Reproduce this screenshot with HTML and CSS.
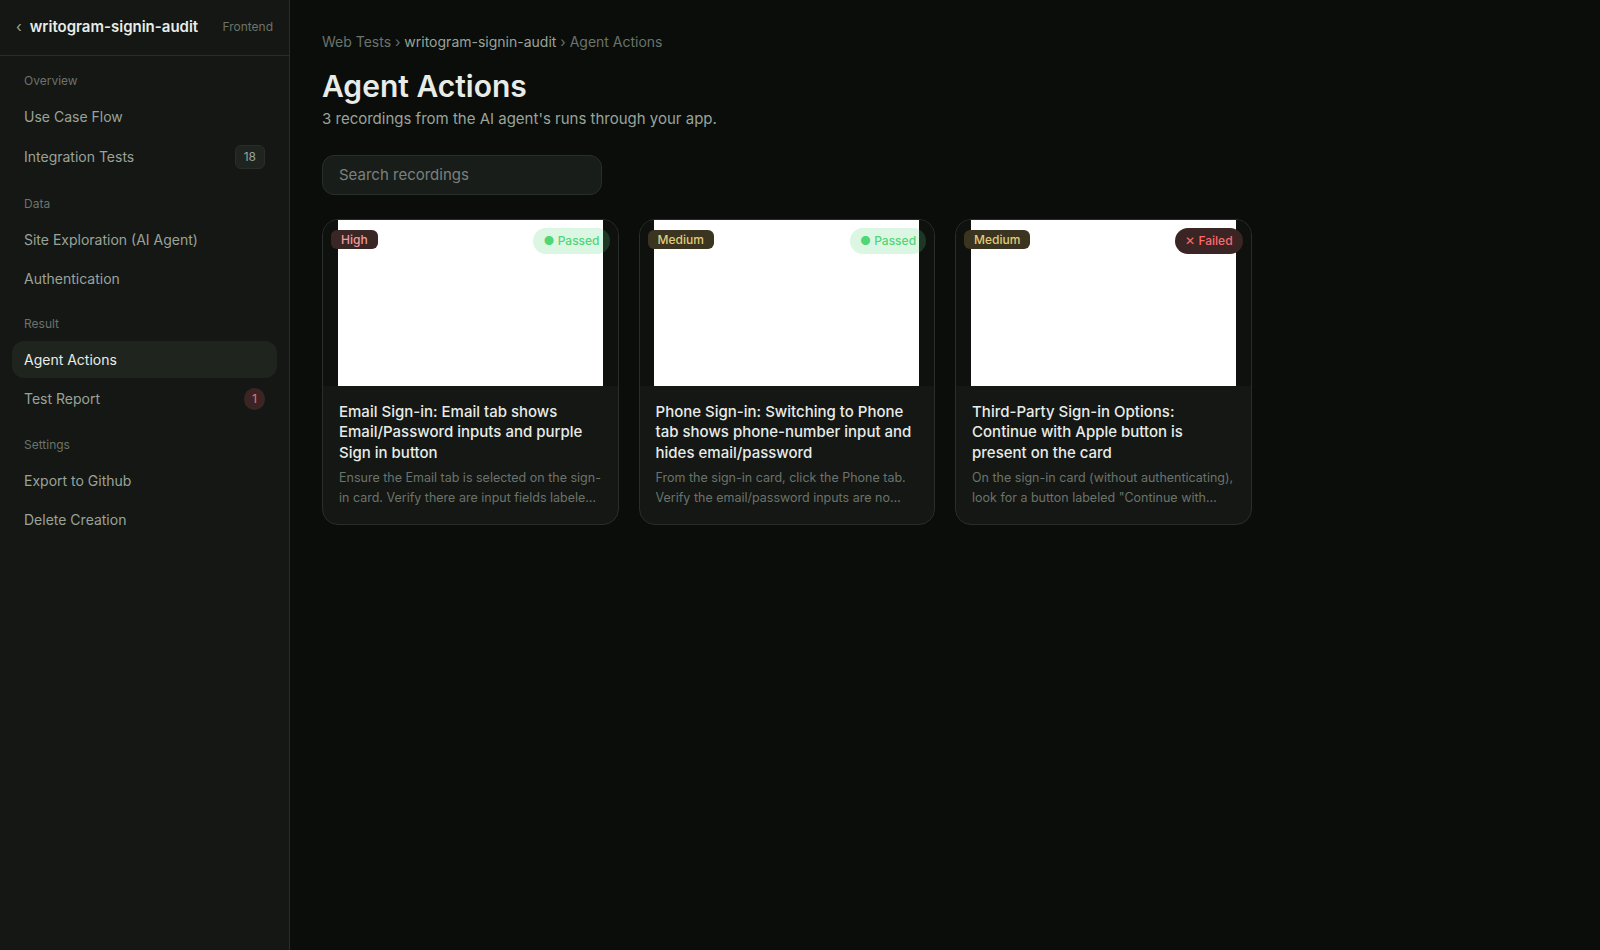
FILE: index.html
```html
<!DOCTYPE html>
<html lang="en">
<head>
  <meta charset="UTF-8">
  <meta name="viewport" content="width=device-width, initial-scale=1.0">
  <title>Agent Actions - writogram-signin-audit</title>
  <link rel="stylesheet" href="styles.css">
</head>
<body>
  <aside class="sidebar">
    <div class="sidebar-header">
      <a href="#" class="back">‹</a>
      <span class="project">writogram-signin-audit</span>
      <span class="kind">Frontend</span>
    </div>
    <nav class="nav">
      <div class="nav-section">
        <div class="nav-label">Overview</div>
        <a href="#" class="nav-item">Use Case Flow</a>
        <a href="#" class="nav-item">Integration Tests <span class="count">18</span></a>
      </div>
      <div class="nav-section">
        <div class="nav-label">Data</div>
        <a href="#" class="nav-item">Site Exploration (AI Agent)</a>
        <a href="#" class="nav-item">Authentication</a>
      </div>
      <div class="nav-section">
        <div class="nav-label">Result</div>
        <a href="#" class="nav-item active">Agent Actions</a>
        <a href="#" class="nav-item">Test Report <span class="alert">1</span></a>
      </div>
      <div class="nav-section">
        <div class="nav-label">Settings</div>
        <a href="#" class="nav-item">Export to Github</a>
        <a href="#" class="nav-item">Delete Creation</a>
      </div>
    </nav>
  </aside>

  <main class="main">
    <div class="breadcrumb">Web Tests › <a href="#">writogram-signin-audit</a> › Agent Actions</div>
    <h1>Agent Actions</h1>
    <p class="subtitle">3 recordings from the AI agent's runs through your app.</p>
    <input type="text" class="search" placeholder="Search recordings">

    <div class="grid">
      <article class="card">
        <div class="media">
          <div class="video"></div>
          <span class="priority high">High</span>
          <span class="status passed">● Passed</span>
        </div>
        <div class="card-body">
          <h2>Email Sign-in: Email tab shows Email/Password inputs and purple Sign in button</h2>
          <p>Ensure the Email tab is selected on the sign-in card. Verify there are input fields labeled Email and Password.</p>
        </div>
      </article>

      <article class="card">
        <div class="media">
          <div class="video"></div>
          <span class="priority medium">Medium</span>
          <span class="status passed">● Passed</span>
        </div>
        <div class="card-body">
          <h2>Phone Sign-in: Switching to Phone tab shows phone-number input and hides email/password</h2>
          <p>From the sign-in card, click the Phone tab. Verify the email/password inputs are no longer visible.</p>
        </div>
      </article>

      <article class="card">
        <div class="media">
          <div class="video"></div>
          <span class="priority medium">Medium</span>
          <span class="status failed">✕ Failed</span>
        </div>
        <div class="card-body">
          <h2>Third-Party Sign-in Options: Continue with Apple button is present on the card</h2>
          <p>On the sign-in card (without authenticating), look for a button labeled "Continue with Apple".</p>
        </div>
      </article>
    </div>
  </main>
</body>
</html>
```
FILE: styles.css
```css
* {
  box-sizing: border-box;
}
body {
  margin: 0;
  font-family: Inter, sans-serif;
  font-size: 15px;
  line-height: 1.5;
  background-color: #0a0d0a;
  color: #e8ece8;
  display: flex;
  min-height: 100vh;
}
a {
  color: inherit;
  text-decoration: none;
}
.sidebar {
  width: 290px;
  flex-shrink: 0;
  background-color: #141714;
  border-right: 1px solid #2a2e2a;
}
.sidebar-header {
  display: flex;
  align-items: center;
  gap: 8px;
  height: 56px;
  padding: 0 16px 1px;
  border-bottom: 1px solid #2a2e2a;
}
.back {
  font-size: 15px;
  color: #9aa39a;
}
.project {
  font-size: 15px;
  font-weight: 600;
}
.kind {
  margin-left: auto;
  font-size: 12px;
  color: #6b736b;
}
.nav {
  padding: 11.75px 12px;
}
.nav-section {
  display: flex;
  flex-direction: column;
  gap: 2px;
  margin-bottom: 14px;
}
.nav-label {
  padding: 4px 12px 6px;
  font-size: 12px;
  color: #6b736b;
}
.nav-item {
  display: flex;
  align-items: center;
  justify-content: space-between;
  padding: 8px 12px;
  border-radius: 12px;
  font-size: 14px;
  color: #9aa39a;
}
.nav-item.active {
  background-color: #1f241f;
  color: #e8ece8;
}
.count {
  padding: 2px 8px;
  border: 1px solid #2a2e2a;
  border-radius: 6px;
  background-color: #1f241f;
  font-size: 12px;
}
.alert {
  padding: 2px 8px;
  border-radius: 999px;
  background-color: #3b2424;
  color: #ff6b6b;
  font-size: 12px;
}
.main {
  flex: 1;
  padding: 32px;
}
.breadcrumb {
  margin-bottom: 17px;
  font-size: 14px;
  line-height: 19px;
  color: #6b736b;
}
.breadcrumb a {
  color: #9aa39a;
}
h1 {
  margin: 0 0 4px;
  font-size: 30px;
  font-weight: 600;
  line-height: 1.2;
}
.subtitle {
  margin: 0 0 26px;
  line-height: 21px;
  color: #9aa39a;
}
.search {
  display: block;
  width: 280px;
  height: 40px;
  margin-bottom: 24px;
  padding: 0 16px 2px;
  border: 1px solid #2a2e2a;
  border-radius: 12px;
  background-color: #191d1a;
  color: #e8ece8;
  font-family: inherit;
  font-size: 15px;
}
.search::placeholder {
  color: #7c807c;
}
.grid {
  display: grid;
  grid-template-columns: repeat(3, 1fr);
  gap: 20px;
  max-width: 929.6px;
}
.card {
  border: 1px solid #2a2e2a;
  border-radius: 16px;
  background-color: #141714;
  overflow: hidden;
}
.media {
  position: relative;
  display: flex;
  justify-content: center;
  aspect-ratio: 16 / 9;
  background-color: #0f110f;
}
.video {
  height: 100%;
  aspect-ratio: 16 / 10;
  background-color: #fff;
}
.priority {
  position: absolute;
  top: 10px;
  left: 8px;
  padding: 0 10px;
  border-radius: 6px;
  font-size: 12px;
  font-weight: 500;
  line-height: 19px;
}
.high {
  background-color: #3b2626;
  color: #f29b9b;
}
.medium {
  background-color: #3a3420;
  color: #e0cc7a;
}
.status {
  position: absolute;
  top: 8px;
  right: 8px;
  padding: 4px 10px;
  border-radius: 999px;
  font-size: 12px;
  font-weight: 500;
}
.passed {
  padding-left: 10.5px;
  background-color: rgba(80, 210, 120, 0.2);
  color: #4fd675;
}
.failed {
  background-color: #3b2424;
  color: #ff6b6b;
}
.card-body {
  padding: 16px;
}
.card-body h2 {
  margin: 0 0 4px;
  font-size: 15px;
  font-weight: 500;
  line-height: 1.375;
}
.card-body p {
  display: -webkit-box;
  -webkit-box-orient: vertical;
  -webkit-line-clamp: 2;
  overflow: hidden;
  margin: 0;
  font-size: 12.5px;
  line-height: 1.6;
  color: #6b736b;
}
```
